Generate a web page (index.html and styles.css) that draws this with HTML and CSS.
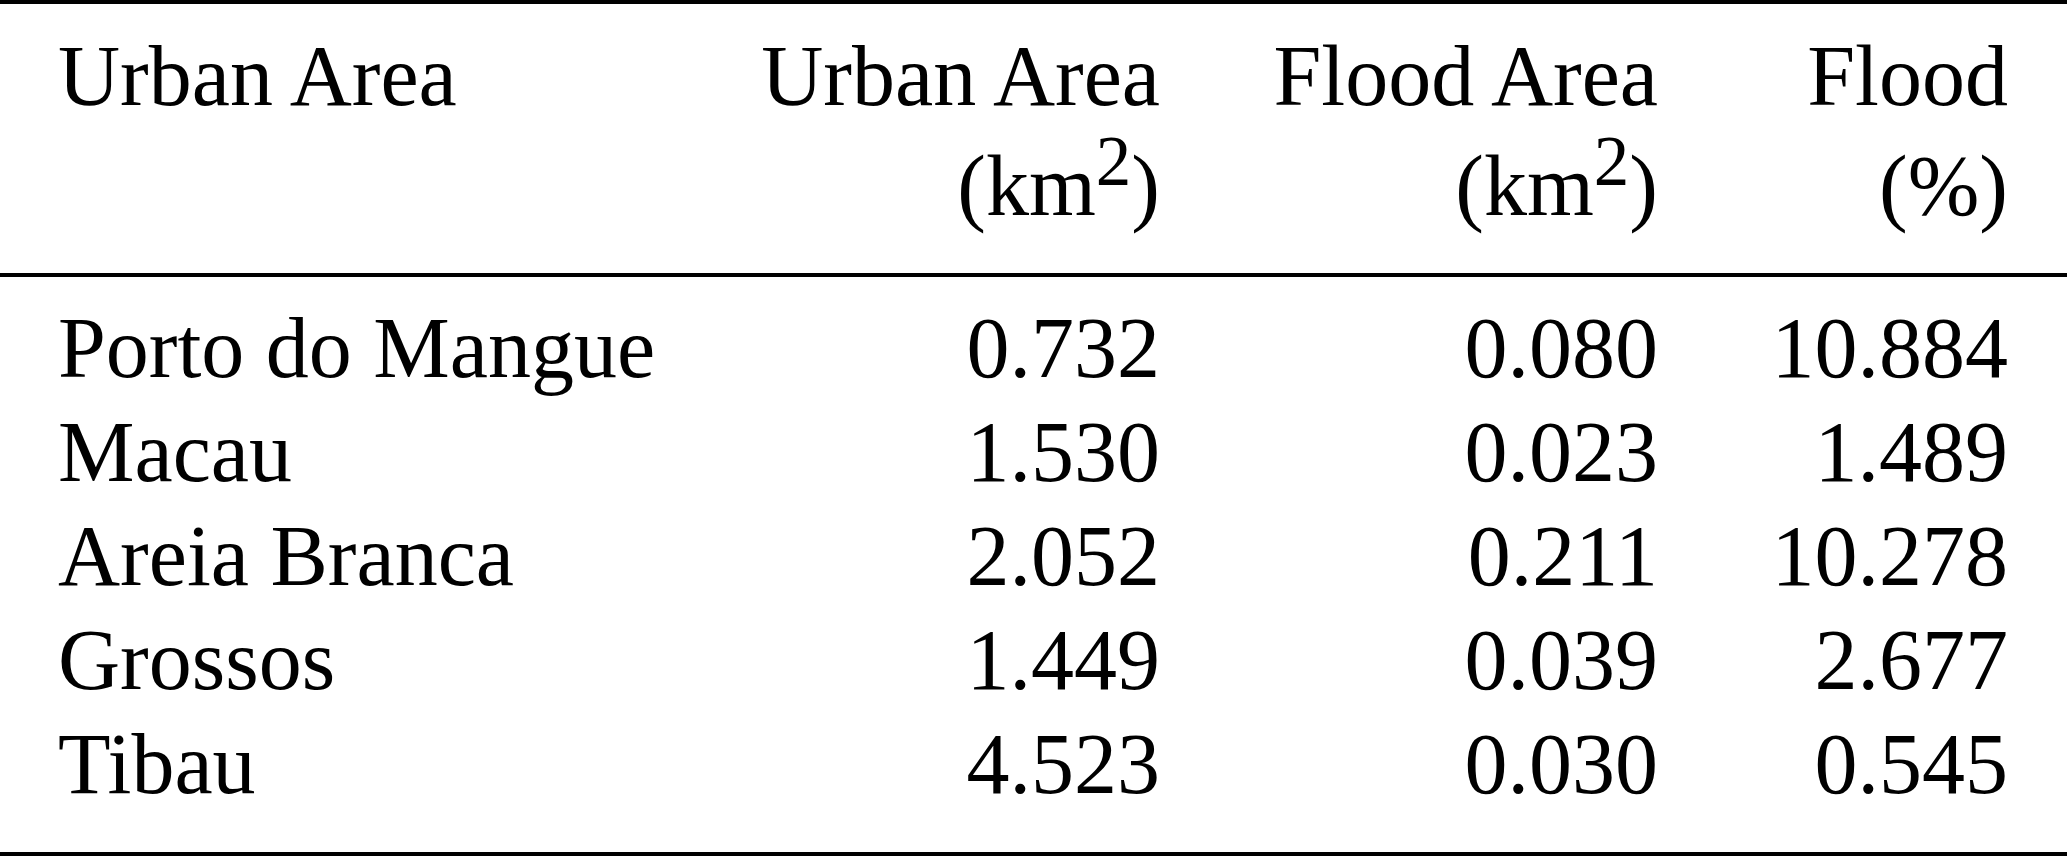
FILE: index.html
```html
<!DOCTYPE html>
<html lang="en">
<head>
<meta charset="utf-8">
<title>Urban flood areas</title>
<link rel="stylesheet" href="styles.css">
</head>
<body>
<table class="data">
  <colgroup>
    <col class="c-name">
    <col class="c-urban">
    <col class="c-flood">
    <col class="c-pct">
  </colgroup>
  <thead>
    <tr>
      <th class="name"><span class="hl">Urban Area</span></th>
      <th class="num"><span class="hl">Urban Area</span><span class="hl second">(km<sup>2</sup>)</span></th>
      <th class="num"><span class="hl">Flood Area</span><span class="hl second">(km<sup>2</sup>)</span></th>
      <th class="num last"><span class="hl">Flood</span><span class="hl second">(%)</span></th>
    </tr>
  </thead>
  <tbody>
    <tr>
      <td class="name">Porto do Mangue</td>
      <td class="num">0.732</td>
      <td class="num">0.080</td>
      <td class="num last">10.884</td>
    </tr>
    <tr>
      <td class="name">Macau</td>
      <td class="num">1.530</td>
      <td class="num">0.023</td>
      <td class="num last">1.489</td>
    </tr>
    <tr>
      <td class="name">Areia Branca</td>
      <td class="num">2.052</td>
      <td class="num">0.211</td>
      <td class="num last">10.278</td>
    </tr>
    <tr>
      <td class="name">Grossos</td>
      <td class="num">1.449</td>
      <td class="num">0.039</td>
      <td class="num last">2.677</td>
    </tr>
    <tr>
      <td class="name">Tibau</td>
      <td class="num">4.523</td>
      <td class="num">0.030</td>
      <td class="num last">0.545</td>
    </tr>
  </tbody>
</table>
</body>
</html>
```

FILE: styles.css
```css
html, body {
  margin: 0;
  padding: 0;
  background: #ffffff;
}

body {
  font-family: "Liberation Serif", "Times New Roman", serif;
  font-size: 86px;
  line-height: 104px;
  color: #000000;
}

.data {
  width: 2067px;
  border-collapse: separate;
  border-spacing: 0;
  table-layout: fixed;
  border-top: 4px solid #000000;
  border-bottom: 4px solid #000000;
}

.c-name { width: 757px; }
.c-urban { width: 403px; }
.c-flood { width: 498px; }
.c-pct { width: 409px; }

.data th,
.data td {
  padding: 0;
  font-weight: normal;
  vertical-align: top;
  white-space: nowrap;
}

.data .name {
  text-align: left;
  padding-left: 58px;
}

.data .num {
  text-align: right;
}

.data .last {
  padding-right: 59px;
}

.data thead th {
  padding-top: 20px;
  padding-bottom: 35px;
  border-bottom: 4px solid #000000;
}

.hl {
  display: block;
  height: 104px;
}

.hl.second {
  margin-top: 6px;
}

sup {
  font-size: 71px;
  line-height: 0;
  vertical-align: 30px;
}

.data tbody td {
  height: 104px;
}

.data tbody tr:first-child td {
  padding-top: 19px;
}

.data tbody tr:last-child td {
  padding-bottom: 36px;
}
```
